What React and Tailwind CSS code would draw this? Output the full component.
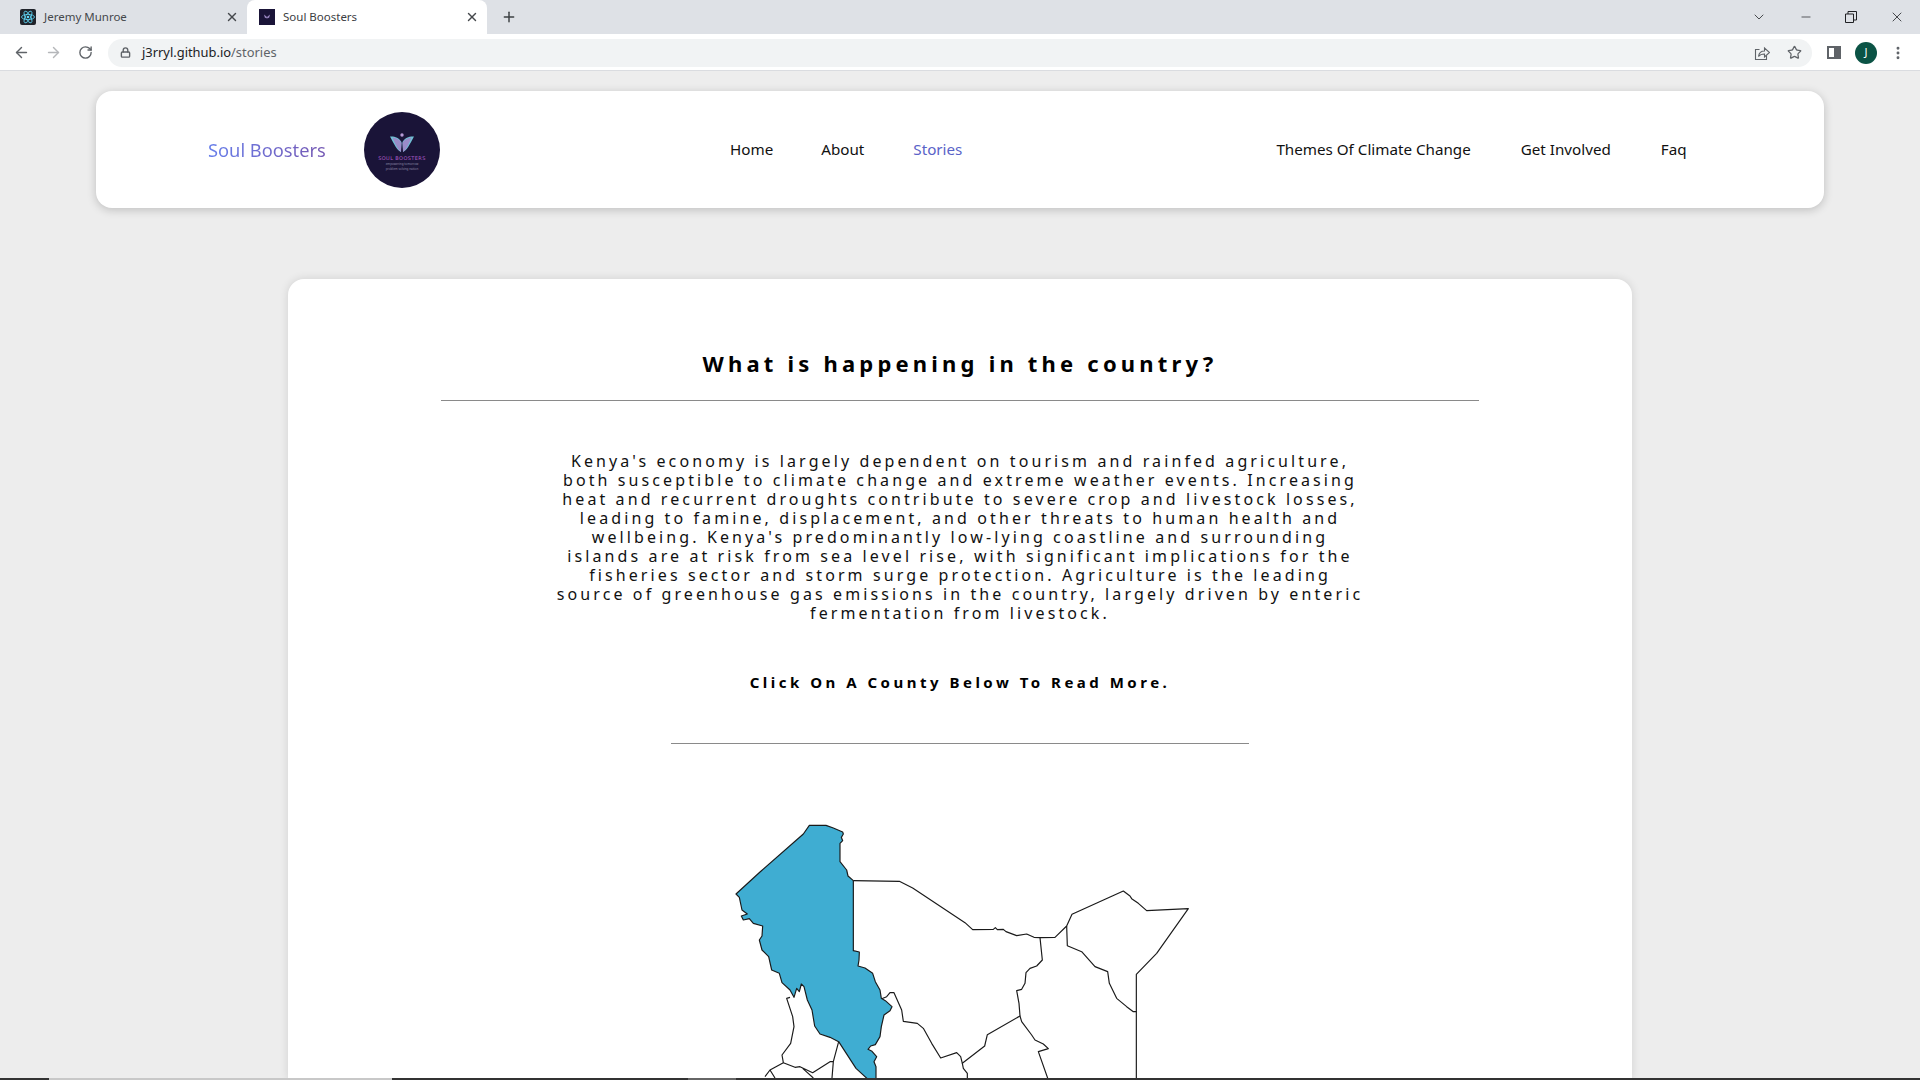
import { ArrowLeft, ArrowRight, RotateCw, Lock, X, Plus, ChevronDown, Minus, Star, EllipsisVertical } from "lucide-react";

const paragraph = [
  "Kenya's economy is largely dependent on tourism and rainfed agriculture,",
  "both susceptible to climate change and extreme weather events. Increasing",
  "heat and recurrent droughts contribute to severe crop and livestock losses,",
  "leading to famine, displacement, and other threats to human health and",
  "wellbeing. Kenya's predominantly low-lying coastline and surrounding",
  "islands are at risk from sea level rise, with significant implications for the",
  "fisheries sector and storm surge protection. Agriculture is the leading",
  "source of greenhouse gas emissions in the country, largely driven by enteric",
  "fermentation from livestock.",
];

const font = "font-['Noto_Sans',sans-serif]";

function ReactFavicon() {
  return (
    <svg width="16" height="16" viewBox="0 0 16 16" className="shrink-0">
      <rect width="16" height="16" rx="2" fill="#20232a" />
      <g fill="none" stroke="#61dafb" strokeWidth="0.8">
        <ellipse cx="8" cy="8" rx="6.5" ry="2.6" />
        <ellipse cx="8" cy="8" rx="6.5" ry="2.6" transform="rotate(60 8 8)" />
        <ellipse cx="8" cy="8" rx="6.5" ry="2.6" transform="rotate(120 8 8)" />
      </g>
      <circle cx="8" cy="8" r="1.3" fill="#61dafb" />
    </svg>
  );
}

function SoulFavicon() {
  return (
    <svg width="16" height="16" viewBox="0 0 16 16" className="shrink-0">
      <rect width="16" height="16" fill="#1a1438" />
      <path d="M8 8 5 5.5 5.8 8.5 7.6 9.5zM8 8l3-2.500-.8 3-1.800 1z" fill="#9d8ac7" />
    </svg>
  );
}

function ShareIcon() {
  return (
    <svg width="16" height="16" viewBox="0 0 16 16" fill="none" stroke="#5f6368" strokeWidth="1.1" className="mr-[17px]">
      <path d="M5.500 4.500H1.500v10h11v-4" />
      <path d="M4.500 11.500C5 8 7.500 6 10.500 6V3l5 4.500-5 4.500V9C8 9 6 9.500 4.500 11.500z" />
    </svg>
  );
}

function Tab({ title, active, favicon, width }) {
  return (
    <div className={`flex h-[34px] items-center gap-2 pr-[8px] pl-[12px] text-[11.5px] ${width} ${active ? "rounded-t-lg bg-white text-[#3c4043]" : "text-[#45484c]"}`}>
      {favicon}
      <span className="flex-1">{title}</span>
      <X size={14} strokeWidth={2.4} className="text-[#45484c]" />
    </div>
  );
}

function BrowserChrome() {
  return (
    <div className={`shrink-0 ${font}`}>
      <div className="flex h-[34px] items-center bg-[#dee1e6]">
        <div className="w-[8px]" />
        <Tab title="Jeremy Munroe" favicon={<ReactFavicon />} width="w-[239px]" />
        <Tab title="Soul Boosters" favicon={<SoulFavicon />} width="w-[240px]" active />
        <Plus size={16} strokeWidth={2.2} className="ml-[14px] text-[#3c4043]" />
        <div className="flex-1" />
        <ChevronDown size={16} strokeWidth={1.4} className="mr-[32px] text-[#3c4043]" />
        <Minus size={14} strokeWidth={1.2} className="mr-[32px] text-[#202124]" />
        <svg width="12" height="12" viewBox="0 0 12 12" fill="none" stroke="#202124" className="mr-[32px]">
          <path d="M.5 3h8v8.500h-8zM3 3V.5h8.500V9H8.500" />
        </svg>
        <X size={16} strokeWidth={1.2} className="mr-[15px] text-[#202124]" />
      </div>
      <div className="flex h-[37px] items-center border-b border-[#dadce0] bg-white pt-px">
        <ArrowLeft size={17} strokeWidth={2} className="ml-[13px] text-[#5f6368]" />
        <ArrowRight size={17} strokeWidth={2} className="ml-[15px] text-[#b5b7ba]" />
        <RotateCw size={15} strokeWidth={2.2} className="ml-[16px] text-[#5f6368]" />
        <div className="ml-[15px] flex h-[28px] w-[1704px] items-center rounded-full bg-[#f1f3f4] pl-[12px]">
          <Lock size={11} strokeWidth={3} className="text-[#5f6368]" />
          <span className="ml-[11px] flex-1 text-[12.9px] text-[#202124]">
            j3rryl.github.io<span className="text-[#5f6368]">/stories</span>
          </span>
          <ShareIcon />
          <Star size={15} strokeWidth={2} className="mr-[10px] text-[#5f6368]" />
        </div>
        <div className="ml-[15px] flex h-[13px] w-[14px] justify-end border-2 border-[#5f6368] bg-white">
          <div className="h-full w-[5px] bg-[#5f6368]" />
        </div>
        <div className="ml-[14px] flex h-[22px] w-[22px] items-center justify-center rounded-full bg-[#0b5345] text-[11px] text-white">J</div>
        <EllipsisVertical size={16} strokeWidth={2.4} className="ml-[13px] text-[#5f6368]" />
      </div>
    </div>
  );
}

function Logo() {
  return (
    <div className="flex h-[76px] w-[76px] shrink-0 flex-col items-center rounded-full bg-[#1a1438] pt-[21px]">
      <svg width="26" height="20" viewBox="0 0 26 20">
        <circle cx="13" cy="2" r="1.700" fill="#b79ad6" />
        <path d="M1 3.500C5 3 10 4.500 12.500 9L11.800 19C8 17 5.500 12 1 3.500z" fill="#6fc3d6" />
        <path d="M25 3.500C21 3 16 4.500 13.500 9L14.200 19C18 17 20.500 12 25 3.500z" fill="#6fc3d6" />
        <path d="M3.500 4.500C7 5 10.500 6 12.500 10L12 19C9 17 6.500 12 3.500 4.500z" fill="#9a8cc9" />
        <path d="M22.500 4.500C19 5 15.500 6 13.500 10L14 19C17 17 19.500 12 22.500 4.500z" fill="#9a8cc9" />
      </svg>
      <div className="mt-[3px] font-['DejaVu_Sans',sans-serif] text-[5px] leading-[5px] tracking-[0.4px] whitespace-nowrap text-[#b05cc8]">SOUL BOOSTERS</div>
      <div className="mt-px text-[3px] leading-[5px] whitespace-nowrap text-[#8f8aa8]">empowering tomorrow</div>
      <div className="text-[3px] leading-[5px] whitespace-nowrap text-[#8f8aa8]">problem solving nation</div>
    </div>
  );
}

function Navbar() {
  return (
    <div className={`flex h-[117px] w-[1728px] shrink-0 items-center rounded-2xl bg-white pl-[112px] text-[15.2px] text-[#111] shadow-[0_2px_10px_rgba(0,0,0,0.2)] ${font}`}>
      <span className="w-[156px] bg-gradient-to-r from-[#667eea] to-[#764ba2] bg-clip-text text-[18.3px] text-transparent">Soul Boosters</span>
      <Logo />
      <span className="ml-[290px]">Home</span>
      <span className="ml-[48px]">About</span>
      <span className="ml-[49px] text-[#5a63c8]">Stories</span>
      <span className="ml-[314px]">Themes Of Climate Change</span>
      <span className="ml-[50px]">Get Involved</span>
      <span className="ml-[50px]">Faq</span>
    </div>
  );
}

function CountyMap() {
  return (
    <svg width="480" height="268" viewBox="0 0 1440 804" className="mt-[66px] ml-[432px] block shrink-0 self-start" fill="none" stroke="#1a1a1a" strokeWidth="3.500" strokeLinejoin="round">
      <path
        fill="#3fadd2"
        d="M268 46 318 46 340 54 368 66 370 72 364 82 368 92 360 100 360 155 380 180 384 198 400 212 400 422 418 426 417 450 414 468 435 474 458 490 466 515 480 540 484 565 496 572 516 590 510 602 492 615 484 650 480 680 466 704 452 708 444 718 456 724 470 740 462 755 468 770 468 810 446 810 408 775 356 695 330 682 300 672 284 648 276 600 262 570 252 530 244 522 238 545 230 535 222 562 210 540 186 518 178 490 155 480 146 440 126 420 118 390 126 378 128 348 100 340 88 326 70 330 64 318 82 312 66 300 58 262 48 252 120 186 250 72Z"
      />
      <path d="M210 562 200 565 218 620 222 650 212 700 186 735 190 758 150 780 135 800M190 758 225 772 240 770 278 788 330 755 340 755 356 695M340 755 336 804M248 775 280 804M150 780 165 804" />
      <g transform="translate(360 150)">
        <path d="M40 62 178 64 218 84 375 188 398 209 460 208 466 203 472 209 490 208 498 215 530 227 560 222 582 232 600 233 645 232 680 198 696 163 850 93 870 108 875 116 895 130 920 152 1045 146 950 280 889 343 889 660" />
        <path d="M600 233 607 300 590 318 570 325 558 338 555 370 545 388 530 392 537 430 540 468 545 485 575 525 585 540 610 552 625 566 595 575 625 660" />
        <path d="M540 468 442 524 434 558 367 610 370 625 382 640 382 660" />
        <path d="M367 610 362 590 350 578 302 594 275 550 250 505 232 490 190 484 185 450 162 398 150 398 140 410 125 416" />
        <path d="M680 198 682 257 725 275 765 320 803 335 808 370 830 415 860 440 880 455 889 455" />
      </g>
    </svg>
  );
}

export default function App() {
  return (
    <div className="relative flex h-screen w-full flex-col overflow-hidden bg-[#ededed]">
      <BrowserChrome />
      <div className="flex flex-1 flex-col items-center overflow-hidden pt-[20px]">
        <Navbar />
        <div className={`mt-[71px] flex w-[1344px] flex-1 flex-col items-center rounded-t-2xl bg-white pt-[66px] shadow-[0_0_10px_rgba(0,0,0,0.12)] ${font}`}>
          <h1 className="text-[22px] leading-[36px] font-bold tracking-[4.2px] text-black">What is happening in the country?</h1>
          <div className="mt-[19px] h-px w-[1038px] bg-[#8a8a8a]" />
          <p className="mt-[51px] text-center text-[16px] leading-[19px] tracking-[3.1px] whitespace-nowrap text-[#111]">
            {paragraph.map((line) => (
              <span key={line} className="block">{line}</span>
            ))}
          </p>
          <div className="mt-[49px] text-[15px] leading-[20px] font-bold tracking-[3.5px] text-black">Click On A County Below To Read More.</div>
          <div className="mt-[51px] h-px w-[578px] bg-[#8a8a8a]" />
          <CountyMap />
        </div>
      </div>
      <div className="absolute right-0 bottom-0 left-0 flex h-[2px] bg-[#333]">
        <div className="w-[49px]" />
        <div className="w-[343px] bg-[#c8c8c8]" />
        <div className="w-[296px]" />
        <div className="w-[48px] bg-[#666]" />
      </div>
    </div>
  );
}
